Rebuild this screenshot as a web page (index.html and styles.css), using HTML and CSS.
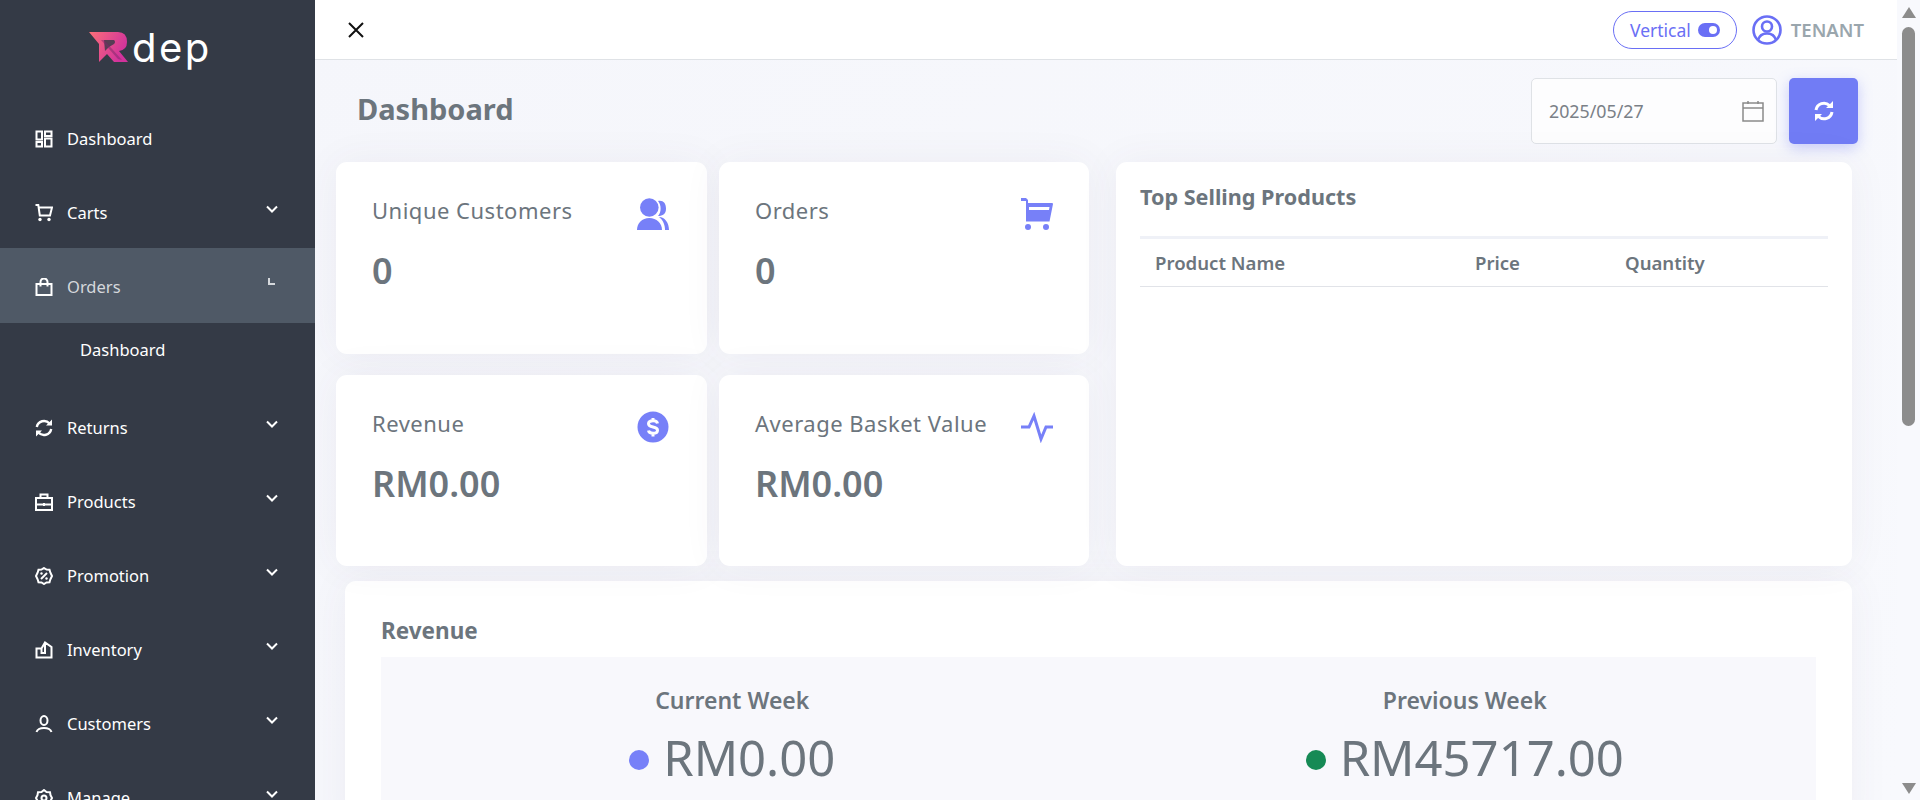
FILE: index.html
```html
<!DOCTYPE html>
<html lang="en">
<head>
<meta charset="utf-8">
<title>Dashboard</title>
<link rel="stylesheet" href="styles.css">
</head>
<body>
<div class="app">
  <aside class="sidebar">
    <div class="logo">
      <svg class="logo-mark" width="44" height="32" viewBox="0 0 44 32">
        <defs><linearGradient id="lg" x1="0" y1="0" x2="1" y2="0.4"><stop offset="0" stop-color="#fb6f78"/><stop offset="1" stop-color="#d1329c"/></linearGradient></defs>
        <path fill="url(#lg)" d="M0 0H29Q38 0 38 10Q38 18 30 19L39 30H25L18 22L10 30V12Z"/>
        <path fill="#343a46" d="M15 8H25Q27 10 25 12L20 15L16 19Z" opacity=".8"/>
        <path fill="#7a2a6a" d="M12 8L15 8L33 28L29 27Z" opacity=".5"/>
      </svg>
      <span class="logo-text">dep</span>
    </div>
    <nav class="nav">
      <a class="nav-item">
        <svg class="nav-icon" viewBox="0 0 18 18"><path d="M1.500 1.500h5.500v8H1.500zM1.500 12h5.500v4.500H1.500zM10 1.500h6.500v4.500H10zM10 8.500h6.500v8H10z"/></svg>
        <span class="nav-label">Dashboard</span>
      </a>
      <a class="nav-item">
        <svg class="nav-icon" viewBox="0 0 18 18"><path d="M.5 1h2.800l1.500 10.500h10.200L17 3.500H3.500"/><circle class="dot" cx="5" cy="15.500" r="1.700"/><circle class="dot" cx="14" cy="15.500" r="1.700"/></svg>
        <span class="nav-label">Carts</span>
        <svg class="chev" viewBox="0 0 12 8"><path d="M1 1.500l5 5 5-5"/></svg>
      </a>
      <a class="nav-item active">
        <svg class="nav-icon" viewBox="0 0 18 18"><path d="M1.500 6h15v11h-15zM5.500 8.500V4a3.500 3.500 0 0 1 7 0v4.500"/></svg>
        <span class="nav-label">Orders</span>
        <svg class="chev chev-open" viewBox="0 0 12 12"><path d="M3 2v6h6"/></svg>
      </a>
      <a class="sub-item">Dashboard</a>
      <a class="nav-item">
        <svg class="nav-icon big" viewBox="0 0 18 18"><path d="M1.800 8A7.300 7.300 0 0 1 14.500 4.500M16.200 10A7.300 7.300 0 0 1 3.500 13.500"/><path class="solid" d="M11 6.500h6V.5zM7 11.500H1V17.500z"/></svg>
        <span class="nav-label">Returns</span>
        <svg class="chev" viewBox="0 0 12 8"><path d="M1 1.500l5 5 5-5"/></svg>
      </a>
      <a class="nav-item">
        <svg class="nav-icon" viewBox="0 0 18 18"><path d="M1 5h16v12H1zM5.500 5V1.500h7V5M1 11.500h16"/><path d="M9 10v3"/></svg>
        <span class="nav-label">Products</span>
        <svg class="chev" viewBox="0 0 12 8"><path d="M1 1.500l5 5 5-5"/></svg>
      </a>
      <a class="nav-item">
        <svg class="nav-icon" viewBox="0 0 18 18"><path d="M9 1l2.500 1.500 3 .2.800 2.800L17 9l-1.700 3.500-.8 2.800-3 .2L9 17l-2.500-1.500-3-.2-.8-2.800L1 9l1.700-3.500.8-2.800 3-.2z"/><path d="M6 12l6-6"/><circle class="dot" cx="6.500" cy="6.500" r="1.200"/><circle class="dot" cx="11.500" cy="11.500" r="1.200"/></svg>
        <span class="nav-label">Promotion</span>
        <svg class="chev" viewBox="0 0 12 8"><path d="M1 1.500l5 5 5-5"/></svg>
      </a>
      <a class="nav-item">
        <svg class="nav-icon" viewBox="0 0 18 18"><path d="M1.500 7.500h5L10 1.500l6.500 4.500v10.500h-15zM6.500 7.500V12H10V1.500"/></svg>
        <span class="nav-label">Inventory</span>
        <svg class="chev" viewBox="0 0 12 8"><path d="M1 1.500l5 5 5-5"/></svg>
      </a>
      <a class="nav-item">
        <svg class="nav-icon" viewBox="0 0 18 18"><ellipse cx="9" cy="5.500" rx="3.500" ry="4.500"/><path d="M1.500 17c1-3 4-4 7.500-4s6.500 1 7.500 4"/></svg>
        <span class="nav-label">Customers</span>
        <svg class="chev" viewBox="0 0 12 8"><path d="M1 1.500l5 5 5-5"/></svg>
      </a>
      <a class="nav-item">
        <svg class="nav-icon" viewBox="0 0 18 18"><path d="M9 1l2.500 2 3.500.2.500 3L17 9l-1.500 2.800-.5 3-3.500.2L9 17l-2.500-2-3.500-.2-.5-3L1 9l1.500-2.800.5-3 3.500-.2z"/><circle cx="9" cy="9" r="2.500"/></svg>
        <span class="nav-label">Manage</span>
        <svg class="chev" viewBox="0 0 12 8"><path d="M1 1.500l5 5 5-5"/></svg>
      </a>
    </nav>
  </aside>

  <main class="main">
    <header class="topbar">
      <svg class="close" viewBox="0 0 18 18"><path d="M2 2l14 14M16 2L2 16"/></svg>
      <div class="top-right">
        <div class="pill">
          <span>Vertical</span>
          <span class="toggle"></span>
        </div>
        <svg class="user" viewBox="0 0 30 30"><circle cx="15" cy="15" r="13.500"/><circle cx="15" cy="11.500" r="5"/><path d="M6 25c1.500-5 5-6.500 9-6.500s7.500 1.500 9 6.500"/></svg>
        <span class="tenant">TENANT</span>
      </div>
    </header>

    <div class="content">
      <div class="page-head">
        <h1 class="title">Dashboard</h1>
        <div class="filters">
          <div class="date">
            <span>2025/05/27</span>
            <svg class="cal" viewBox="0 0 22 22"><path d="M1 3h20v18H1zM1 8h20M6 1v3M16 1v3"/></svg>
          </div>
          <button class="refresh">
            <svg viewBox="0 0 20 20"><path d="M2 9A8 8 0 0 1 15.500 4.500M18 11A8 8 0 0 1 4.500 15.500"/><path class="solid" d="M12 7h7V0zM8 13H1v7z"/></svg>
          </button>
        </div>
      </div>

      <div class="overview">
        <div class="stats">
          <section class="card stat">
            <div class="stat-head">
              <span class="stat-label">Unique Customers</span>
              <svg class="stat-icon" viewBox="0 0 32 32"><circle cx="12.300" cy="9.500" r="9.300"/><path d="M0 32c0-7 5-12 12.300-12S25 25 25 32z"/><path d="M21 3c5-1 8 2 8 7.500S26 18 21 18c3.500-3.500 3.500-11 0-15zM22 19c6 0 10 6 10 13h-4c0-5-2-10-6-13z"/></svg>
            </div>
            <div class="stat-value">0</div>
          </section>
          <section class="card stat">
            <div class="stat-head">
              <span class="stat-label">Orders</span>
              <svg class="stat-icon" viewBox="0 0 32 32"><path d="M0 0h5l2 2v3h24.500l.500 1-3.500 17.500H5V3H0zM8 9v3h20l.5-3z" fill-rule="evenodd"/><circle cx="7" cy="29" r="3"/><circle cx="25" cy="29" r="3"/></svg>
            </div>
            <div class="stat-value">0</div>
          </section>
          <section class="card stat">
            <div class="stat-head">
              <span class="stat-label">Revenue</span>
              <svg class="stat-icon" viewBox="0 0 32 32"><circle cx="16" cy="16" r="15.500"/><path class="cut" d="M20.500 12.500c-.3-1.800-2-2.700-4.500-2.700s-4.500 1-4.500 3 2 2.700 4.500 3.200 4.500 1.200 4.500 3.200-2 3-4.500 3-4.200-.9-4.500-2.700M16 7v3M16 22.500v3"/></svg>
            </div>
            <div class="stat-value">RM0.00</div>
          </section>
          <section class="card stat">
            <div class="stat-head">
              <span class="stat-label">Average Basket Value</span>
              <svg class="stat-icon line" viewBox="0 0 32 32"><path d="M0 16h8l5-11 7 23 5-12h7"/></svg>
            </div>
            <div class="stat-value">RM0.00</div>
          </section>
        </div>

        <section class="card top-products">
          <h2 class="card-title">Top Selling Products</h2>
          <table class="products">
            <thead>
              <tr><th class="col-name">Product Name</th><th class="col-price">Price</th><th>Quantity</th></tr>
            </thead>
          </table>
        </section>
      </div>

      <section class="card revenue">
        <h2 class="card-title revenue-title">Revenue</h2>
        <div class="weeks">
          <div class="week">
            <div class="week-label">Current Week</div>
            <div class="week-value"><span class="bullet cur"></span>RM0.00</div>
          </div>
          <div class="week">
            <div class="week-label">Previous Week</div>
            <div class="week-value"><span class="bullet prev"></span>RM45717.00</div>
          </div>
        </div>
      </section>
    </div>
  </main>

  <div class="scrollbar">
    <span class="arrow up"></span>
    <span class="thumb"></span>
    <span class="arrow down"></span>
  </div>
</div>
</body>
</html>
```

FILE: styles.css
```css
* { box-sizing: border-box; }
html, body { margin: 0; height: 100%; overflow: hidden; }
body {
  font-family: "Noto Sans", "Open Sans", sans-serif;
  color: #6c757d;
  background: #f7f8fc;
}
.app { display: flex; height: 800px; overflow: hidden; }

/* sidebar */
.sidebar { width: 315px; flex: none; background: #343a46; color: #fff; overflow: hidden; }
.logo { height: 100px; display: flex; align-items: flex-start; padding: 32px 0 0 89px; }
.logo-mark { flex: none; margin-right: -1px; }
.logo-text { font-family: "Inter", sans-serif; font-weight: 400; font-size: 40px; line-height: 32px; letter-spacing: 2.500px; }
.nav { display: flex; flex-direction: column; }
.nav-item { height: 74px; flex: none; display: flex; align-items: center; padding: 3px 37px 0 35px; font-size: 16.500px; color: #fff; }
.nav-item.active { background: #4f5966; color: #d5d8dc; height: 75px; padding-top: 2px; }
.nav-icon { width: 18px; height: 18px; margin-right: 14px; fill: none; stroke: #fff; stroke-width: 2; flex: none; }
.nav-icon.big { stroke-width: 2.400; }
.nav-icon .dot, .nav-icon .solid { fill: #fff; stroke: none; }
.nav-label { flex: 1; }
.chev { width: 12px; height: 8px; fill: none; stroke: #fff; stroke-width: 2; margin-top: -7px; flex: none; }
.chev-open { height: 12px; stroke: #d5d8dc; margin-top: -9px; }
.sub-item { height: 48px; margin: 2px 0 16px; padding-left: 80px; display: flex; align-items: center; font-size: 16.500px; color: #fff; }

/* main */
.main { flex: 1; min-width: 0; background: linear-gradient(135deg, #f5f6fb, #f8f9fd); overflow: hidden; }
.topbar { height: 60px; background: #fff; border-bottom: 1px solid #dfe2e6; display: flex; align-items: center; justify-content: space-between; padding: 0 33px 0 32px; }
.close { width: 18px; height: 18px; fill: none; stroke: #111; stroke-width: 2; margin-top: 1px; }
.top-right { display: flex; align-items: center; }
.pill { height: 38px; border: 1px solid #6a6ff5; border-radius: 19px; color: #6a6ff5; display: flex; align-items: center; gap: 7px; padding: 0 16px; font-size: 17.500px; }
.toggle { width: 22px; height: 14px; border-radius: 7px; background: #6a6ff5; position: relative; }
.toggle::after { content: ""; position: absolute; right: 3px; top: 3px; width: 8px; height: 8px; border-radius: 50%; background: #fff; }
.user { width: 30px; height: 30px; margin: 0 9px 0 15px; fill: none; stroke: #6a6ff5; stroke-width: 2.600; }
.tenant { font-weight: 600; font-size: 18.500px; color: #9aa6ad; }

.content { padding: 18px 44px 0 21px; }
.page-head { height: 66px; display: flex; align-items: center; justify-content: space-between; margin-right: -5px; padding: 0 0 0 21px; }
.title { margin: 0 0 5px; font-size: 29px; font-weight: 700; color: #6c757d; }
.filters { display: flex; gap: 12px; }
.date { width: 246px; height: 66px; background: #fdfdfe; border: 1px solid #dfe2e6; border-radius: 5px; display: flex; align-items: center; justify-content: space-between; padding: 0 12px 0 17px; font-size: 17.800px; color: #7a8087; }
.cal { width: 22px; height: 22px; fill: none; stroke: #8a8a8a; stroke-width: 1.500; }
.refresh { width: 69px; height: 66px; border: 0; border-radius: 5px; background: #717cf5; box-shadow: 0 4px 14px rgba(113,124,245,.35); display: flex; align-items: center; justify-content: center; padding: 0; }
.refresh svg { width: 20px; height: 20px; fill: none; stroke: #fff; stroke-width: 3; }
.refresh .solid { fill: #fff; stroke: none; }

.overview { display: grid; grid-template-columns: 753px 736px; column-gap: 27px; margin-top: 18px; }
.card { background: #fff; border-radius: 11px; box-shadow: 0 0 40px rgba(82,63,105,.06); }
.stats { display: grid; grid-template-columns: 371px 370px; grid-template-rows: 192px 191px; gap: 21px 12px; }
.stat { padding: 36px 36px 0 36px; }
.stat:nth-child(odd) { padding-right: 38px; }
.stat-head { display: flex; justify-content: space-between; align-items: flex-start; }
.stat-label { font-size: 22px; line-height: 25px; letter-spacing: .5px; color: #6c757d; }
.stat-icon { width: 32px; height: 32px; fill: #7780f8; flex: none; }
.stat-icon .cut { fill: none; stroke: #fff; stroke-width: 3; }
.stat-icon.line { fill: none; stroke: #7780f8; stroke-width: 3; }
.stat-value { font-size: 36px; line-height: 48px; font-weight: 600; margin-top: 17px; color: #6c757d; }

.top-products { padding: 22px 24px; }
.card-title { margin: 0; font-size: 21.600px; line-height: 26px; font-weight: 700; color: #6c757d; }
.products { width: 100%; border-collapse: collapse; margin-top: 26px; table-layout: fixed; }
.products th { text-align: left; font-size: 18.600px; font-weight: 600; padding: 0 0 1px 15px; height: 49px; border-top: 3px solid #eff1f7; border-bottom: 1px solid #e1e3e8; color: #6c757d; }
.col-name { width: 320px; }
.col-price { width: 150px; }

.revenue { margin: 15px 0 0 9px; padding: 35px 36px 0; width: 1507px; height: 260px; }
.revenue-title { font-size: 22.500px; line-height: 30px; }
.weeks { background: #f8f8fc; margin-top: 11px; display: grid; grid-template-columns: 1fr 1fr; column-gap: 30px; padding-top: 28px; height: 160px; }
.week { text-align: center; }
.week-label { font-size: 23px; line-height: 30px; font-weight: 600; }
.week-value { font-size: 49px; line-height: 64px; margin-top: 10px; display: flex; align-items: center; justify-content: center; }
.bullet { width: 20px; height: 20px; border-radius: 50%; margin: 6px 14px 0 0; }
.bullet.cur { background: #7780f8; }
.bullet.prev { background: #168a55; }

/* scrollbar */
.scrollbar { width: 23px; flex: none; background: #f8f9fd; display: flex; flex-direction: column; align-items: center; padding: 7px 0 6px; }
.thumb { width: 13px; height: 399px; border-radius: 7px; background: #8c8c8c; margin-top: 9px; }
.arrow { width: 0; height: 0; border-left: 7px solid transparent; border-right: 7px solid transparent; flex: none; }
.arrow.up { border-bottom: 11px solid #8c8c8c; }
.arrow.down { border-top: 11px solid #8c8c8c; margin-top: auto; }
```
